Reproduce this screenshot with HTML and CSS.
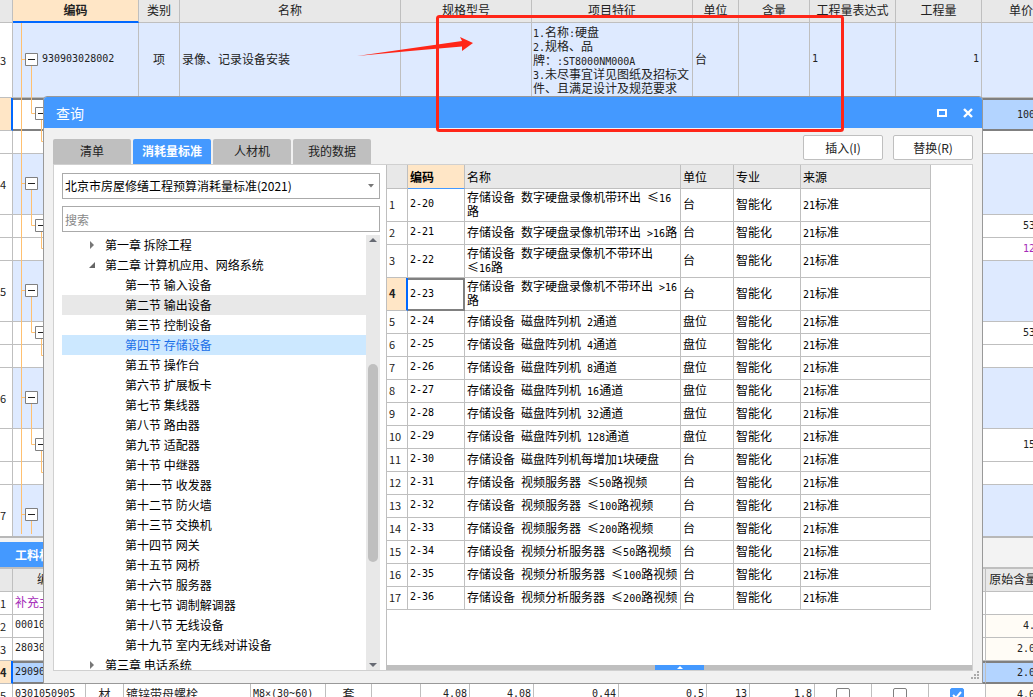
FILE: index.html
```html
<!DOCTYPE html>
<html lang="zh-CN">
<head>
<meta charset="utf-8">
<title>查询</title>
<link rel="stylesheet" href="styles.css">
</head>
<body>
<main class="app">
  <section class="pane pane-main">
    <table class="sheet main-sheet">
      <colgroup><col class="w13"><col class="w126"><col class="w41"><col class="w221"><col class="w131"><col class="w161"><col class="w46"><col class="w71"><col class="w86"><col class="w86"><col class="w54"></colgroup>
      <thead><tr><th></th><th class="active">编码</th><th>类别</th><th>名称</th><th>规格型号</th><th>项目特征</th><th>单位</th><th>含量</th><th>工程量表达式</th><th>工程量</th><th class="edge">单价</th></tr></thead>
      <tbody>
        <tr class="h75 tint"><td class="no">3</td><td class="code num">930903028002</td><td class="mid">项</td><td>录像、记录设备安装</td><td></td><td class="feature"><span class="num">1.</span>名称<span class="num">:</span>硬盘<br><span class="num">2.</span>规格、品<br>牌：<span class="num">:ST8000NM000A</span><br><span class="num">3.</span>未尽事宜详见图纸及招标文件、且满足设计及规范要求</td><td>台</td><td></td><td class="num">1</td><td class="num right">1</td><td></td></tr>
        <tr class="h33 selected"><td class="no"></td><td class="focus"></td><td></td><td></td><td></td><td></td><td></td><td></td><td></td><td></td><td class="num cut">100</td></tr>
        <tr class="h23"><td class="no"></td><td colspan="10"></td></tr>
        <tr class="h61 tint"><td class="no">4</td><td colspan="10"></td></tr>
        <tr class="h23"><td class="no"></td><td colspan="9"></td><td class="num cut">53</td></tr>
        <tr class="h23"><td class="no"></td><td colspan="9"></td><td class="num cut purple">12</td></tr>
        <tr class="h61 tint"><td class="no">5</td><td colspan="10"></td></tr>
        <tr class="h23"><td class="no"></td><td colspan="9"></td><td class="num cut">53</td></tr>
        <tr class="h23"><td class="no"></td><td colspan="10"></td></tr>
        <tr class="h61 tint"><td class="no">6</td><td colspan="10"></td></tr>
        <tr class="h33"><td class="no"></td><td colspan="9"></td><td class="num cut">15</td></tr>
        <tr class="h23"><td class="no"></td><td colspan="10"></td></tr>
        <tr class="h61 tint"><td class="no">7</td><td colspan="10"></td></tr>
      </tbody>
    </table>
    <svg class="branches" width="50" height="534" viewBox="0 0 50 534" aria-hidden="true">
      <g fill="none" stroke="#ffc070">
        <path d="M21.500 23V534M21 59.500H25M31.500 65V113.500H35M41.500 119V141.500H44"/>
        <path d="M21 183.500H25M31.500 190V225.500H35M41.500 231V248.500H44"/>
        <path d="M21 290.500H25M31.500 297V332.500H35M41.500 338V355.500H44"/>
        <path d="M21 397.500H25M31.500 404V444.500H35M41.500 450V472.500H44"/>
        <path d="M21 514.500H25M31.500 521V534"/>
      </g>
      <g fill="#fff" stroke="#808080">
        <path d="M25.500 53.500h12v12h-12zM35.500 107.500h12v12h-12zM25.500 177.500h12v12h-12zM35.500 219.500h12v12h-12zM25.500 284.500h12v12h-12zM35.500 326.500h12v12h-12zM25.500 391.500h12v12h-12zM35.500 438.500h12v12h-12zM25.500 508.500h12v12h-12z"/>
      </g>
      <path stroke="#222" d="M28 59.500h7M38 113.500h7M28 183.500h7M38 225.500h7M28 290.500h7M38 332.500h7M28 397.500h7M38 444.500h7M28 514.500h7"/>
    </svg>
  </section>

  <section class="pane-detail">
    <div class="detail-tabs"><button class="detail-tab" type="button">工料机显示</button></div>
    <table class="sheet detail-sheet">
      <colgroup><col class="w13"><col class="w73"><col class="w38"><col class="w127"><col class="w75"><col class="w46"><col class="w49"><col class="w49"><col class="w64"><col class="w85"><col class="w88"><col class="w43"><col class="w65"><col class="w57"><col class="w57"><col class="w57"><col class="w50"></colgroup>
      <thead><tr><th></th><th>编码</th><th colspan="14"></th><th class="origin">原始含量</th></tr></thead>
      <tbody>
        <tr class="h23"><td class="no">1</td><td class="purple">补充主材</td><td colspan="14"></td><td></td></tr>
        <tr class="h23"><td class="no">2</td><td class="num">00010100</td><td colspan="14"></td><td class="num cut warm">4.</td></tr>
        <tr class="h23"><td class="no">3</td><td class="num">28030100</td><td colspan="14"></td><td class="num cut warm">2.0</td></tr>
        <tr class="h23 selected full"><td class="no">4</td><td class="num">29090100</td><td colspan="14"></td><td class="num cut">2.0</td></tr>
        <tr class="h23"><td class="no">5</td><td class="num">0301050905</td><td class="mid">材</td><td>镀锌带母螺栓</td><td class="num">M8×(30~60)</td><td class="mid">套</td><td></td><td class="num right">4.08</td><td class="num right">4.08</td><td class="num right">0.44</td><td class="num right">0.5</td><td class="num right">13</td><td class="num right">1.8</td><td class="mid"><input type="checkbox" aria-label="选项一"></td><td class="mid"><input type="checkbox" aria-label="选项二"></td><td class="mid"><input type="checkbox" aria-label="选项三" checked></td><td class="num cut warm">4.0</td></tr>
      </tbody>
    </table>
  </section>

  <section class="dialog" role="dialog" aria-labelledby="dialog-title">
    <header class="titlebar">
      <h1 id="dialog-title">查询</h1>
      <button class="window-button" type="button" aria-label="最大化"><svg width="10" height="10" viewBox="0 0 10 10"><path d="M1 2h8v6H1z" fill="none" stroke="#fff" stroke-width="2"/></svg></button>
      <button class="window-button" type="button" aria-label="关闭"><svg width="10" height="10" viewBox="0 0 10 10"><path d="M1 1l8 8M9 1L1 9" stroke="#fff" stroke-width="2.400"/></svg></button>
    </header>
    <div class="toolbar">
      <nav class="tabs"><button type="button">清单</button><button type="button" class="on">消耗量标准</button><button type="button">人材机</button><button type="button">我的数据</button></nav>
      <div class="actions"><button type="button">插入(I)</button><button type="button">替换(R)</button></div>
    </div>
    <div class="panel">
      <aside class="side">
        <div class="combo">
          <select aria-label="标准"><option>北京市房屋修缮工程预算消耗量标准(2021)</option></select>
          <svg width="6" height="4" viewBox="0 0 6 4" aria-hidden="true"><path d="M0 0h6L3 3.500z" fill="#777"/></svg>
        </div>
        <input class="search" type="text" placeholder="搜索" aria-label="搜索">
        <div class="tree-box">
          <ul class="tree">
            <li class="chapter"><svg width="12" height="12" viewBox="0 0 12 12"><path d="M4 2l4 4-4 4z" fill="#777"/></svg>第一章 拆除工程</li>
            <li class="chapter"><svg width="12" height="12" viewBox="0 0 12 12"><path d="M9 3v6H3z" fill="#666"/></svg>第二章 计算机应用、网络系统</li>
            <li>第一节 输入设备</li>
            <li class="hover">第二节 输出设备</li>
            <li>第三节 控制设备</li>
            <li class="current">第四节 存储设备</li>
            <li>第五节 操作台</li>
            <li>第六节 扩展板卡</li>
            <li>第七节 集线器</li>
            <li>第八节 路由器</li>
            <li>第九节 适配器</li>
            <li>第十节 中继器</li>
            <li>第十一节 收发器</li>
            <li>第十二节 防火墙</li>
            <li>第十三节 交换机</li>
            <li>第十四节 网关</li>
            <li>第十五节 网桥</li>
            <li>第十六节 服务器</li>
            <li>第十七节 调制解调器</li>
            <li>第十八节 无线设备</li>
            <li>第十九节 室内无线对讲设备</li>
            <li class="chapter"><svg width="12" height="12" viewBox="0 0 12 12"><path d="M4 2l4 4-4 4z" fill="#777"/></svg>第三章 电话系统</li>
          </ul>
          <div class="scrollbar" aria-hidden="true">
            <svg width="8" height="4" viewBox="0 0 8 4"><path d="M0 4h8L4 0z" fill="#666a73"/></svg>
            <div class="track"><div class="thumb"></div></div>
            <svg width="8" height="4" viewBox="0 0 8 4"><path d="M0 0h8L4 4z" fill="#666a73"/></svg>
          </div>
        </div>
      </aside>
      <div class="results">
        <table class="sheet grid">
          <colgroup><col class="w21"><col class="w57"><col class="w216"><col class="w53"><col class="w67"><col class="w130"></colgroup>
          <thead><tr><th></th><th class="active">编码</th><th>名称</th><th>单位</th><th>专业</th><th>来源</th></tr></thead>
          <tbody>
            <tr class="h33"><td class="idx">1</td><td class="num">2-20</td><td>存储设备<span class="num"> </span>数字硬盘录像机带环出<span class="num"> </span>≤<span class="num">16</span><br>路</td><td>台</td><td>智能化</td><td><span class="num">21</span>标准</td></tr>
            <tr class="h23"><td class="idx">2</td><td class="num">2-21</td><td>存储设备<span class="num"> </span>数字硬盘录像机带环出<span class="num"> &gt;16</span>路</td><td>台</td><td>智能化</td><td><span class="num">21</span>标准</td></tr>
            <tr class="h33"><td class="idx">3</td><td class="num">2-22</td><td>存储设备<span class="num"> </span>数字硬盘录像机不带环出<br>≤<span class="num">16</span>路</td><td>台</td><td>智能化</td><td><span class="num">21</span>标准</td></tr>
            <tr class="h33 picked"><td class="idx">4</td><td class="num focus">2-23</td><td>存储设备<span class="num"> </span>数字硬盘录像机不带环出<span class="num"> &gt;16</span><br>路</td><td>台</td><td>智能化</td><td><span class="num">21</span>标准</td></tr>
            <tr class="h23"><td class="idx">5</td><td class="num">2-24</td><td>存储设备<span class="num"> </span>磁盘阵列机<span class="num"> 2</span>通道</td><td>盘位</td><td>智能化</td><td><span class="num">21</span>标准</td></tr>
            <tr class="h23"><td class="idx">6</td><td class="num">2-25</td><td>存储设备<span class="num"> </span>磁盘阵列机<span class="num"> 4</span>通道</td><td>盘位</td><td>智能化</td><td><span class="num">21</span>标准</td></tr>
            <tr class="h23"><td class="idx">7</td><td class="num">2-26</td><td>存储设备<span class="num"> </span>磁盘阵列机<span class="num"> 8</span>通道</td><td>盘位</td><td>智能化</td><td><span class="num">21</span>标准</td></tr>
            <tr class="h23"><td class="idx">8</td><td class="num">2-27</td><td>存储设备<span class="num"> </span>磁盘阵列机<span class="num"> 16</span>通道</td><td>盘位</td><td>智能化</td><td><span class="num">21</span>标准</td></tr>
            <tr class="h23"><td class="idx">9</td><td class="num">2-28</td><td>存储设备<span class="num"> </span>磁盘阵列机<span class="num"> 32</span>通道</td><td>盘位</td><td>智能化</td><td><span class="num">21</span>标准</td></tr>
            <tr class="h23"><td class="idx">10</td><td class="num">2-29</td><td>存储设备<span class="num"> </span>磁盘阵列机<span class="num"> 128</span>通道</td><td>盘位</td><td>智能化</td><td><span class="num">21</span>标准</td></tr>
            <tr class="h23"><td class="idx">11</td><td class="num">2-30</td><td>存储设备<span class="num"> </span>磁盘阵列机每增加<span class="num">1</span>块硬盘</td><td>台</td><td>智能化</td><td><span class="num">21</span>标准</td></tr>
            <tr class="h23"><td class="idx">12</td><td class="num">2-31</td><td>存储设备<span class="num"> </span>视频服务器<span class="num"> </span>≤<span class="num">50</span>路视频</td><td>台</td><td>智能化</td><td><span class="num">21</span>标准</td></tr>
            <tr class="h23"><td class="idx">13</td><td class="num">2-32</td><td>存储设备<span class="num"> </span>视频服务器<span class="num"> </span>≤<span class="num">100</span>路视频</td><td>台</td><td>智能化</td><td><span class="num">21</span>标准</td></tr>
            <tr class="h23"><td class="idx">14</td><td class="num">2-33</td><td>存储设备<span class="num"> </span>视频服务器<span class="num"> </span>≤<span class="num">200</span>路视频</td><td>台</td><td>智能化</td><td><span class="num">21</span>标准</td></tr>
            <tr class="h23"><td class="idx">15</td><td class="num">2-34</td><td>存储设备<span class="num"> </span>视频分析服务器<span class="num"> </span>≤<span class="num">50</span>路视频</td><td>台</td><td>智能化</td><td><span class="num">21</span>标准</td></tr>
            <tr class="h23"><td class="idx">16</td><td class="num">2-35</td><td>存储设备<span class="num"> </span>视频分析服务器<span class="num"> </span>≤<span class="num">100</span>路视频</td><td>台</td><td>智能化</td><td><span class="num">21</span>标准</td></tr>
            <tr class="h23"><td class="idx">17</td><td class="num">2-36</td><td>存储设备<span class="num"> </span>视频分析服务器<span class="num"> </span>≤<span class="num">200</span>路视频</td><td>台</td><td>智能化</td><td><span class="num">21</span>标准</td></tr>
          </tbody>
        </table>
        <div class="expander"><button type="button" aria-label="展开"><svg width="6" height="3" viewBox="0 0 6 3"><path d="M0 3h6L3 0z" fill="#fff"/></svg></button></div>
      </div>
    </div>
    <svg class="grip" width="9" height="9" viewBox="0 0 9 9" aria-hidden="true"><path fill="#aaa" d="M6 0h2v2H6zM3 3h2v2H3zM6 3h2v2H6zM0 6h2v2H0zM3 6h2v2H3zM6 6h2v2H6z"/></svg>
  </section>

  <svg class="markup" width="500" height="140" viewBox="0 0 500 140" aria-hidden="true">
    <rect x="87.500" y="16.500" width="405" height="114" rx="2" fill="none" stroke="#ff2618" stroke-width="3"/>
    <path fill="#ff2618" d="M7 56L112 41l-2-4 13 6-11 8 0-4.500L60 51z"/>
  </svg>
</main>
</body>
</html>
```
FILE: styles.css
```css
* { box-sizing: border-box; }

body {
  margin: 0;
  background: #fff;
  color: #222;
  font: 12px/14px "Noto Sans CJK SC", sans-serif;
}

button, input, select { font: inherit; color: inherit; margin: 0; }
button { border: 0; padding: 0; }

.app {
  position: relative;
  display: flex;
  flex-direction: column;
  height: 100vh;
  overflow: hidden;
}

.pane-main { position: relative; flex: 1; overflow: hidden; }
.branches { position: absolute; left: 0; top: 0; }

/* sheets */
.sheet { table-layout: fixed; border-collapse: separate; border-spacing: 0; }
.sheet th, .sheet td {
  padding: 0 2px 2px;
  border-right: 1px solid #bfbfbf;
  border-bottom: 1px solid #bfbfbf;
  white-space: nowrap;
  text-align: left;
}
.sheet th {
  height: 23px;
  padding: 0 0 2px;
  background: #e8e8e8;
  font-weight: normal;
  text-align: center;
}
.sheet th.active {
  background: #ffe6c6;
  border-bottom: 2px solid #0068ff;
  font-weight: bold;
}
.sheet .no { padding: 0; background: #fff; font-size: 11px; }
.sheet .mid { text-align: center; }
.sheet .right { text-align: right; }
.sheet .cut { padding: 0; text-align: right; }
.sheet .code { padding-left: 29px; }
.sheet .feature { white-space: normal; padding: 0 1px; }
.sheet .edge { text-align: left; padding-left: 27px; }
.sheet .origin { text-align: left; padding-left: 3px; }
.num { font-family: "DejaVu Sans Mono", monospace; font-size: 10px; line-height: 10px; white-space: pre; }
.purple { color: #a52cb8; }

.main-sheet { width: 1036px; }
.detail-sheet { width: 1036px; }
.w13 { width: 13px; } .w21 { width: 21px; } .w38 { width: 38px; } .w41 { width: 41px; }
.w43 { width: 43px; } .w46 { width: 46px; } .w49 { width: 49px; } .w50 { width: 50px; }
.w53 { width: 53px; } .w54 { width: 54px; } .w57 { width: 57px; } .w64 { width: 64px; }
.w65 { width: 65px; } .w67 { width: 67px; } .w71 { width: 71px; } .w73 { width: 73px; }
.w75 { width: 75px; } .w85 { width: 85px; } .w86 { width: 86px; } .w88 { width: 88px; }
.w126 { width: 126px; } .w127 { width: 127px; } .w130 { width: 130px; } .w131 { width: 131px; }
.w161 { width: 161px; } .w216 { width: 216px; } .w221 { width: 221px; }
.h23 { height: 23px; } .h33 { height: 33px; } .h61 { height: 61px; } .h75 { height: 75px; }

.tint td { background: #deeaff; }
.warm { background: #fffcf6; }
.selected td {
  background: #b3d4ff;
  border-top: 2px solid #808080;
  border-bottom: 2px solid #808080;
}
.selected .no {
  background: #ffe6c6;
  border-top: 0;
  border-bottom: 1px solid #bfbfbf;
  border-right: 2px solid #0068ff;
  font-weight: bold;
}
.selected .focus { background: #fff; }

/* lower pane */
.pane-detail { height: 161px; overflow: hidden; border-top: 2px solid #b8b8b8; }
.detail-tabs {
  display: flex;
  height: 31px;
  padding-top: 4px;
  background: #f3f3f3;
  border-bottom: 2px solid #bfbfbf;
}
.detail-tab { padding: 0 15px; background: #4499ff; color: #fff; font-weight: bold; }

input[type="checkbox"] {
  appearance: none;
  display: inline-block;
  width: 14px;
  height: 14px;
  border: 1px solid #808080;
  border-radius: 2px;
  background: #fff;
  vertical-align: middle;
}
input[type="checkbox"]:checked {
  border-color: #4499ff;
  background: #4499ff url("data:image/svg+xml,%3Csvg xmlns='http://www.w3.org/2000/svg' viewBox='0 0 12 12'%3E%3Cpath d='M2 6l3 3 5-6' fill='none' stroke='white' stroke-width='2'/%3E%3C/svg%3E") center / 12px no-repeat;
}

/* floating query window */
.dialog {
  position: absolute;
  inset: 96px 50px 13px 43px;
  display: flex;
  flex-direction: column;
  border: 1px solid #999;
  border-radius: 4px 4px 0 0;
  background: #f1f1f1;
  overflow: hidden;
}
.titlebar {
  display: flex;
  align-items: center;
  gap: 16px;
  flex: none;
  height: 31px;
  padding: 0 9px 0 12px;
  background: #4499ff;
  color: #fff;
}
.titlebar h1 { flex: 1; margin: 0; font-size: 14px; font-weight: normal; line-height: 20px; }
.window-button { display: flex; background: none; }

.toolbar {
  display: flex;
  justify-content: space-between;
  flex: none;
  height: 36px;
  padding: 0 9px;
}
.tabs { display: flex; align-items: flex-end; gap: 2px; }
.tabs button { width: 78px; height: 25px; padding-bottom: 2px; background: #bfbfbf; border-radius: 2px 2px 0 0; }
.tabs .on { background: #4499ff; color: #fff; font-weight: bold; }
.actions { display: flex; gap: 10px; padding-top: 7px; }
.actions button {
  width: 80px;
  height: 25px;
  background: #fff;
  border: 1px solid #bfbfbf;
  border-radius: 2px;
}

.panel {
  flex: 1;
  display: flex;
  min-height: 0;
  margin: 0 9px 12px;
  border: 1px solid #d0d0d0;
  background: #fff;
}
.side {
  flex: none;
  display: flex;
  flex-direction: column;
  width: 332px;
  padding: 8px 6px 0 8px;
  color: #000;
}
.combo { position: relative; height: 26px; margin-bottom: 7px; }
.combo select, .search {
  width: 100%;
  height: 26px;
  padding: 0 2px;
  border: 1px solid #aaa;
  border-radius: 0;
  background: #fff;
  appearance: none;
}
.combo svg { position: absolute; right: 6px; top: 11px; }
.search { flex: none; margin-bottom: 3px; }
.search::placeholder { color: #888; }

.tree-box { flex: 1; display: flex; min-height: 0; }
.tree { flex: 1; margin: 0; padding: 0; list-style: none; overflow: hidden; }
.tree li { height: 20px; padding-left: 63px; line-height: 20px; }
.tree .chapter { display: flex; align-items: center; gap: 7px; padding-left: 24px; }
.tree .hover { background: #e8e8e8; }
.tree .current { background: #cce8ff; color: #1a6fe8; }
.scrollbar {
  display: flex;
  flex-direction: column;
  align-items: center;
  width: 14px;
  padding: 3px 0;
  background: #e8e8e8;
}
.track { flex: 1; width: 10px; padding-top: 122px; }
.thumb { height: 198px; border-radius: 5px; background: #bfbfbf; }

.results {
  flex: 1;
  display: flex;
  flex-direction: column;
  justify-content: space-between;
  min-width: 0;
  border-left: 1px solid #bfbfbf;
}
.grid { width: 544px; color: #000; }
.grid th { height: 24px; padding: 0 2px; text-align: left; }
.grid th.active { border-bottom: 1px solid #4499ff; }
.grid .idx { font: 11px/14px "Noto Sans CJK SC", sans-serif; color: #222; }
.picked .idx { background: #ffe6c6; font-weight: bold; border-right: 2px solid #0068ff; }
.picked .focus { border: 2px solid #808080; border-left: 0; }
.expander { display: flex; justify-content: center; height: 5px; background: #bfbfbf; }
.expander button { display: flex; justify-content: center; align-items: center; width: 49px; background: #4499ff; }
.grip { position: absolute; right: 2px; bottom: 3px; }

/* red annotation drawn over the windows */
.markup { position: absolute; left: 350px; top: 0; pointer-events: none; }
```
